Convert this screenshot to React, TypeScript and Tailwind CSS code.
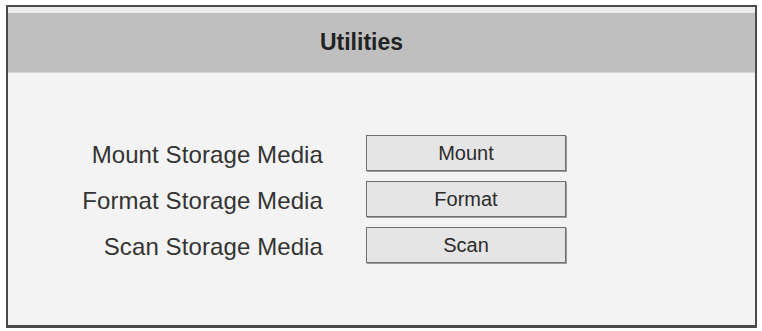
import React from "react";

const ROWS = [
  { label: "Mount Storage Media", action: "Mount" },
  { label: "Format Storage Media", action: "Format" },
  { label: "Scan Storage Media", action: "Scan" },
];

export default function App() {
  return (
    <div className="w-[762px] h-[331px] bg-white pt-[5px] pl-[6px] font-['Liberation_Sans',Arial,sans-serif]">
      <div className="w-[751px] h-[323px] border-2 border-b-[3px] border-[#4a4a4a] bg-[#f3f3f3] flex flex-col">
        {/* Title bar */}
        <div className="h-[6px] bg-[#ebebeb]" />
        <div className="h-[60px] bg-[#bfbfbf] border-b border-[#d6d6d6] flex items-center justify-center pr-[40px]">
          <span className="text-[23px] font-bold text-[#222]">Utilities</span>
        </div>

        {/* Actions */}
        <div className="pt-[62px] grid grid-cols-[315px_200px] gap-x-[43px] gap-y-[10px]">
          {ROWS.map((r) => (
            <React.Fragment key={r.action}>
              <div className="h-[36px] pt-[3px] flex items-center justify-end text-[24px] text-[#333] tracking-[0.1px]">
                {r.label}
              </div>
              <button className="h-[36px] bg-[#e5e5e5] border border-[#6f6f6f] shadow-[1px_1px_0_#9a9a9a] text-[20px] text-[#2b2b2b] flex items-center justify-center">
                {r.action}
              </button>
            </React.Fragment>
          ))}
        </div>
      </div>
    </div>
  );
}
